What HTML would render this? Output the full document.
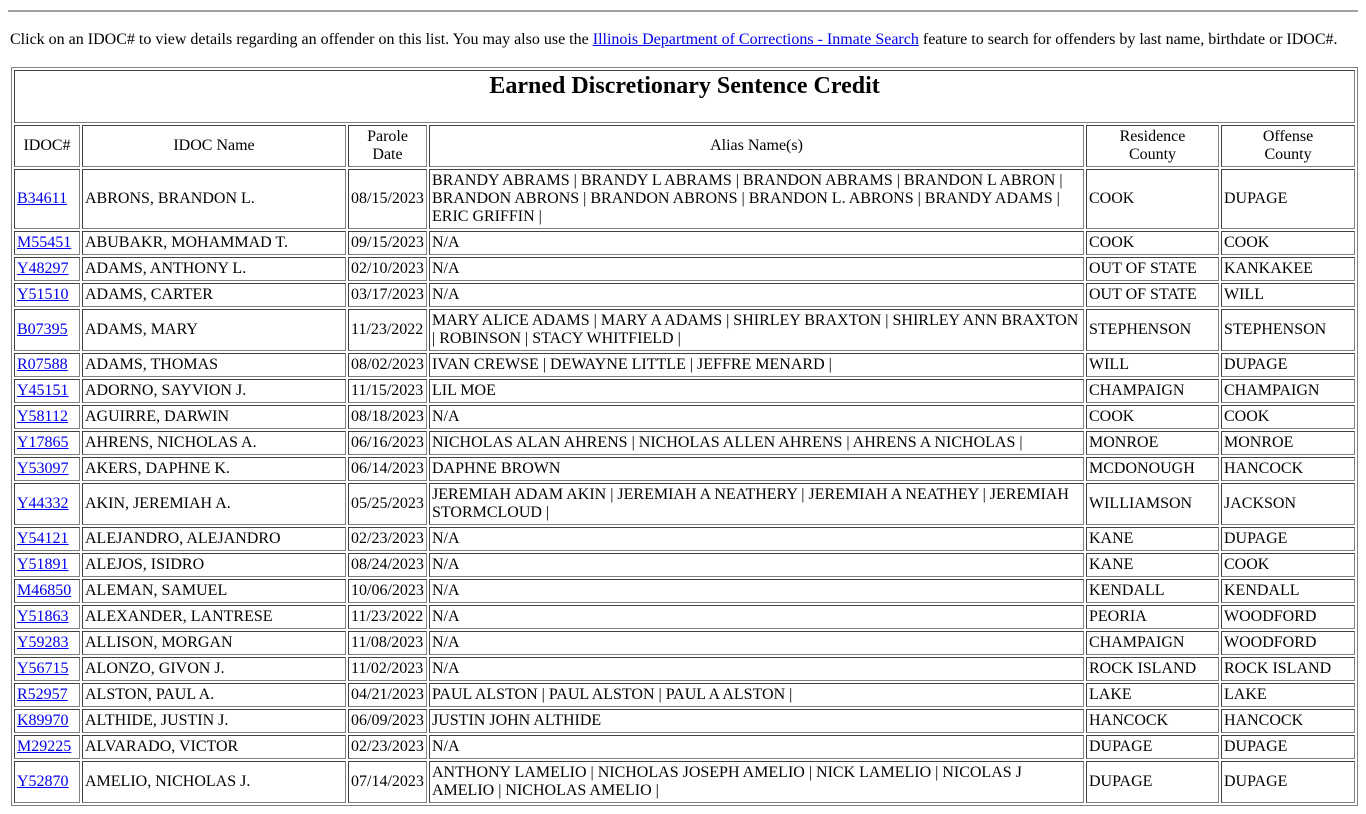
<!DOCTYPE html>
<html><head><meta charset="utf-8"><style>
body{margin:0 8px 8px 8px;padding-top:10px;font-family:"Liberation Serif",serif;font-size:16px;color:#000;background:#fff;overflow:hidden}
hr{border:0;border-top:2px solid #a0a0a0;margin:0;height:0}
p.i{margin:19px 0 0 2px;line-height:18px;font-size:16px}
a{color:#0000ee}
table{border:1px solid #808080;border-collapse:separate;border-spacing:2px;margin:18px 0 0 3px;width:1345px;table-layout:fixed;font-size:16px}
td{border:1px solid #404040;border-right-color:#808080;border-bottom-color:#808080;padding:2px 2px;line-height:18px;vertical-align:middle;overflow:hidden}
td.h{text-align:center}
td.t{height:51px;text-align:center;vertical-align:top;padding:0}
td.t h2{margin:1px 0 0 0;font-size:24px;line-height:28px}
</style></head><body>
<hr>
<p class="i">Click on an IDOC# to view details regarding an offender on this list. You may also use the <a href="#">Illinois Department of Corrections - Inmate Search</a> feature to search for offenders by last name, birthdate or IDOC#.</p>
<table>
<colgroup><col style="width:66px"><col style="width:264px"><col style="width:79px"><col style="width:655px"><col style="width:133px"><col style="width:134px"></colgroup>
<tr><td class="t" colspan="6"><h2>Earned Discretionary Sentence Credit</h2></td></tr>
<tr><td class="h">IDOC#</td><td class="h">IDOC Name</td><td class="h">Parole<br>Date</td><td class="h">Alias Name(s)</td><td class="h">Residence<br>County</td><td class="h">Offense<br>County</td></tr>
<tr><td><a href="#">B34611</a></td><td>ABRONS, BRANDON L.</td><td>08/15/2023</td><td>BRANDY ABRAMS | BRANDY L ABRAMS | BRANDON ABRAMS | BRANDON L ABRON | BRANDON ABRONS | BRANDON ABRONS | BRANDON L. ABRONS | BRANDY ADAMS | ERIC GRIFFIN |</td><td>COOK</td><td>DUPAGE</td></tr>
<tr><td><a href="#">M55451</a></td><td>ABUBAKR, MOHAMMAD T.</td><td>09/15/2023</td><td>N/A</td><td>COOK</td><td>COOK</td></tr>
<tr><td><a href="#">Y48297</a></td><td>ADAMS, ANTHONY L.</td><td>02/10/2023</td><td>N/A</td><td>OUT OF STATE</td><td>KANKAKEE</td></tr>
<tr><td><a href="#">Y51510</a></td><td>ADAMS, CARTER</td><td>03/17/2023</td><td>N/A</td><td>OUT OF STATE</td><td>WILL</td></tr>
<tr><td><a href="#">B07395</a></td><td>ADAMS, MARY</td><td>11/23/2022</td><td>MARY ALICE ADAMS | MARY A ADAMS | SHIRLEY BRAXTON | SHIRLEY ANN BRAXTON | ROBINSON | STACY WHITFIELD |</td><td>STEPHENSON</td><td>STEPHENSON</td></tr>
<tr><td><a href="#">R07588</a></td><td>ADAMS, THOMAS</td><td>08/02/2023</td><td>IVAN CREWSE | DEWAYNE LITTLE | JEFFRE MENARD |</td><td>WILL</td><td>DUPAGE</td></tr>
<tr><td><a href="#">Y45151</a></td><td>ADORNO, SAYVION J.</td><td>11/15/2023</td><td>LIL MOE</td><td>CHAMPAIGN</td><td>CHAMPAIGN</td></tr>
<tr><td><a href="#">Y58112</a></td><td>AGUIRRE, DARWIN</td><td>08/18/2023</td><td>N/A</td><td>COOK</td><td>COOK</td></tr>
<tr><td><a href="#">Y17865</a></td><td>AHRENS, NICHOLAS A.</td><td>06/16/2023</td><td>NICHOLAS ALAN AHRENS | NICHOLAS ALLEN AHRENS | AHRENS A NICHOLAS |</td><td>MONROE</td><td>MONROE</td></tr>
<tr><td><a href="#">Y53097</a></td><td>AKERS, DAPHNE K.</td><td>06/14/2023</td><td>DAPHNE BROWN</td><td>MCDONOUGH</td><td>HANCOCK</td></tr>
<tr><td><a href="#">Y44332</a></td><td>AKIN, JEREMIAH A.</td><td>05/25/2023</td><td>JEREMIAH ADAM AKIN | JEREMIAH A NEATHERY | JEREMIAH A NEATHEY | JEREMIAH STORMCLOUD |</td><td>WILLIAMSON</td><td>JACKSON</td></tr>
<tr><td><a href="#">Y54121</a></td><td>ALEJANDRO, ALEJANDRO</td><td>02/23/2023</td><td>N/A</td><td>KANE</td><td>DUPAGE</td></tr>
<tr><td><a href="#">Y51891</a></td><td>ALEJOS, ISIDRO</td><td>08/24/2023</td><td>N/A</td><td>KANE</td><td>COOK</td></tr>
<tr><td><a href="#">M46850</a></td><td>ALEMAN, SAMUEL</td><td>10/06/2023</td><td>N/A</td><td>KENDALL</td><td>KENDALL</td></tr>
<tr><td><a href="#">Y51863</a></td><td>ALEXANDER, LANTRESE</td><td>11/23/2022</td><td>N/A</td><td>PEORIA</td><td>WOODFORD</td></tr>
<tr><td><a href="#">Y59283</a></td><td>ALLISON, MORGAN</td><td>11/08/2023</td><td>N/A</td><td>CHAMPAIGN</td><td>WOODFORD</td></tr>
<tr><td><a href="#">Y56715</a></td><td>ALONZO, GIVON J.</td><td>11/02/2023</td><td>N/A</td><td>ROCK ISLAND</td><td>ROCK ISLAND</td></tr>
<tr><td><a href="#">R52957</a></td><td>ALSTON, PAUL A.</td><td>04/21/2023</td><td>PAUL ALSTON | PAUL ALSTON | PAUL A ALSTON |</td><td>LAKE</td><td>LAKE</td></tr>
<tr><td><a href="#">K89970</a></td><td>ALTHIDE, JUSTIN J.</td><td>06/09/2023</td><td>JUSTIN JOHN ALTHIDE</td><td>HANCOCK</td><td>HANCOCK</td></tr>
<tr><td><a href="#">M29225</a></td><td>ALVARADO, VICTOR</td><td>02/23/2023</td><td>N/A</td><td>DUPAGE</td><td>DUPAGE</td></tr>
<tr><td><a href="#">Y52870</a></td><td>AMELIO, NICHOLAS J.</td><td>07/14/2023</td><td>ANTHONY LAMELIO | NICHOLAS JOSEPH AMELIO | NICK LAMELIO | NICOLAS J AMELIO | NICHOLAS AMELIO |</td><td>DUPAGE</td><td>DUPAGE</td></tr>
</table>
</body></html>
